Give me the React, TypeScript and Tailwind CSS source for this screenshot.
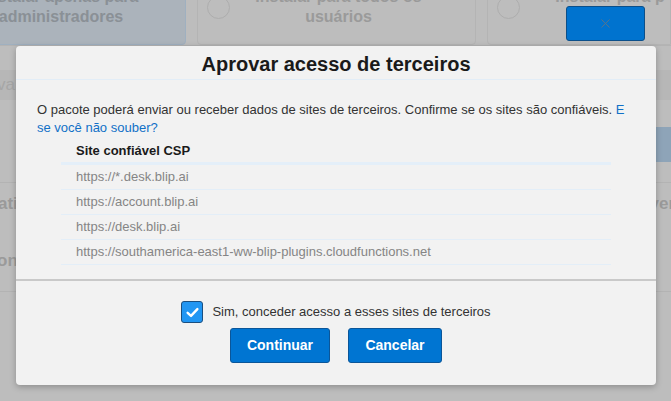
import { X } from "lucide-react";

const sites = [
  "https://*.desk.blip.ai",
  "https://account.blip.ai",
  "https://desk.blip.ai",
  "https://southamerica-east1-ww-blip-plugins.cloudfunctions.net",
];

function BackgroundPage() {
  return (
    <div className="flex flex-col text-[#9a9a9a]">
      {/* install options */}
      <div className="-mt-[16px] flex h-[62px] gap-[11px] border-b border-[#b3b3b3] text-[16px] font-bold leading-[20px]">
        <div className="-ml-[64px] flex w-[250px] flex-col items-center justify-start rounded-br border border-[#9fb0c0] bg-[#abb3bb] pt-[2px] text-[#8a9096]">
          <span>Instalar apenas para</span>
          <span>administradores</span>
        </div>
        <div className="flex w-[279px] items-start rounded-b border border-[#b4b4b4] pl-[9px] pt-[11px]">
          <span className="h-[23px] w-[23px] shrink-0 rounded-full border border-[#adadad]" />
          <div className="-mt-[9px] flex flex-1 flex-col items-center pr-[28px]">
            <span>Instalar para todos os</span>
            <span>usuários</span>
          </div>
        </div>
        <div className="flex flex-1 items-start rounded-bl border border-[#b4b4b4] pl-[9px] pt-[11px]">
          <span className="h-[23px] w-[23px] shrink-0 rounded-full border border-[#adadad]" />
          <div className="-mt-[9px] flex flex-1 flex-col items-center whitespace-nowrap pl-[30px]">
            <span>Instalar para p</span>
            <span>os...</span>
          </div>
        </div>
      </div>

      {/* search band */}
      <div className="mt-[24px] flex h-[30px] items-center bg-[#b7b7b7] text-[17px] text-[#a6a6a6]">
        <span className="-ml-[3px]">va</span>
      </div>

      <div className="mt-[27px] flex h-[35px] justify-end">
        <div className="w-[30px] bg-[#8ea4b8]" />
      </div>

      <div className="mt-[20px] flex h-[110px] flex-col justify-between border-y border-[#b3b3b3] text-[17px] font-bold">
        <div className="mt-[8px] flex justify-between">
          <span className="-ml-[2px]">ati</span>
          <span className="-mr-[4px]">ver</span>
        </div>
        <span className="-ml-[3px] mb-[18px]">ona</span>
      </div>
    </div>
  );
}

function CheckIcon() {
  return (
    <svg viewBox="0 0 20 20" className="h-[15px] w-[15px]">
      <path d="M3.5 10.5 L8 14.5 L16.5 5.5" fill="none" stroke="white" strokeWidth="3.2" strokeLinecap="round" strokeLinejoin="round" />
    </svg>
  );
}

export default function App() {
  return (
    <div className="relative h-[401px] w-[671px] overflow-hidden bg-[#bdbdbd] font-['Liberation_Sans',Arial,sans-serif]">
      <BackgroundPage />

      <button className="absolute left-[566px] top-[6px] flex h-[35px] w-[79px] items-center justify-center rounded-[3px] border border-[#0b4f8a] bg-[#0073cf] text-[#5d7387]">
        <X size={15} strokeWidth={1.5} />
      </button>

      <div className="absolute left-[16px] top-[46px] flex h-[339px] w-[640px] flex-col rounded-[4px] bg-[#f2f2f2] shadow-[0_2px_6px_rgba(0,0,0,0.25)]">
        <div className="flex h-[34px] items-center justify-center border-b border-[#e2edf7] pt-[3px] text-[20px] font-bold text-[#1a1a1a]">
          Aprovar acesso de terceiros
        </div>

        <div className="px-[21px] pt-[21px]">
          <p className="text-[13px] leading-[18px] text-[#333333]">
            O pacote poderá enviar ou receber dados de sites de terceiros. Confirme se os sites são confiáveis.{" "}
            <a className="text-[#1170c7]">E se você não souber?</a>
          </p>

          <div className="mx-[24px]">
            <div className="flex h-[28px] items-center border-b-[3px] border-[#e4eff9] pl-[15px] pt-[2px] text-[13px] font-bold text-[#1a1a1a]">
              Site confiável CSP
            </div>
            {sites.map((s) => (
              <div key={s} className="flex h-[25px] items-center border-b border-[#e3eef8] pl-[15px] text-[13px] text-[#858585]">
                {s}
              </div>
            ))}
          </div>
        </div>

        <div className="mt-[14px] border-t-2 border-[#c9c9c9]" />

        <div className="flex flex-col items-center pt-[20px]">
          <label className="flex items-center gap-[9px] text-[13px] text-[#333333]">
            <span className="flex h-[22px] w-[22px] items-center justify-center rounded-[3px] border border-[#1b4f80] bg-[#2196f3]">
              <CheckIcon />
            </span>
            Sim, conceder acesso a esses sites de terceiros
          </label>
          <div className="mt-[5px] flex gap-[18px]">
            <button className="h-[35px] w-[100px] rounded-[3px] border border-[#0b5699] bg-[#0075d2] text-[14px] font-bold text-white">
              Continuar
            </button>
            <button className="h-[35px] w-[94px] rounded-[3px] border border-[#0b5699] bg-[#0075d2] text-[14px] font-bold text-white">
              Cancelar
            </button>
          </div>
        </div>
      </div>
    </div>
  );
}
